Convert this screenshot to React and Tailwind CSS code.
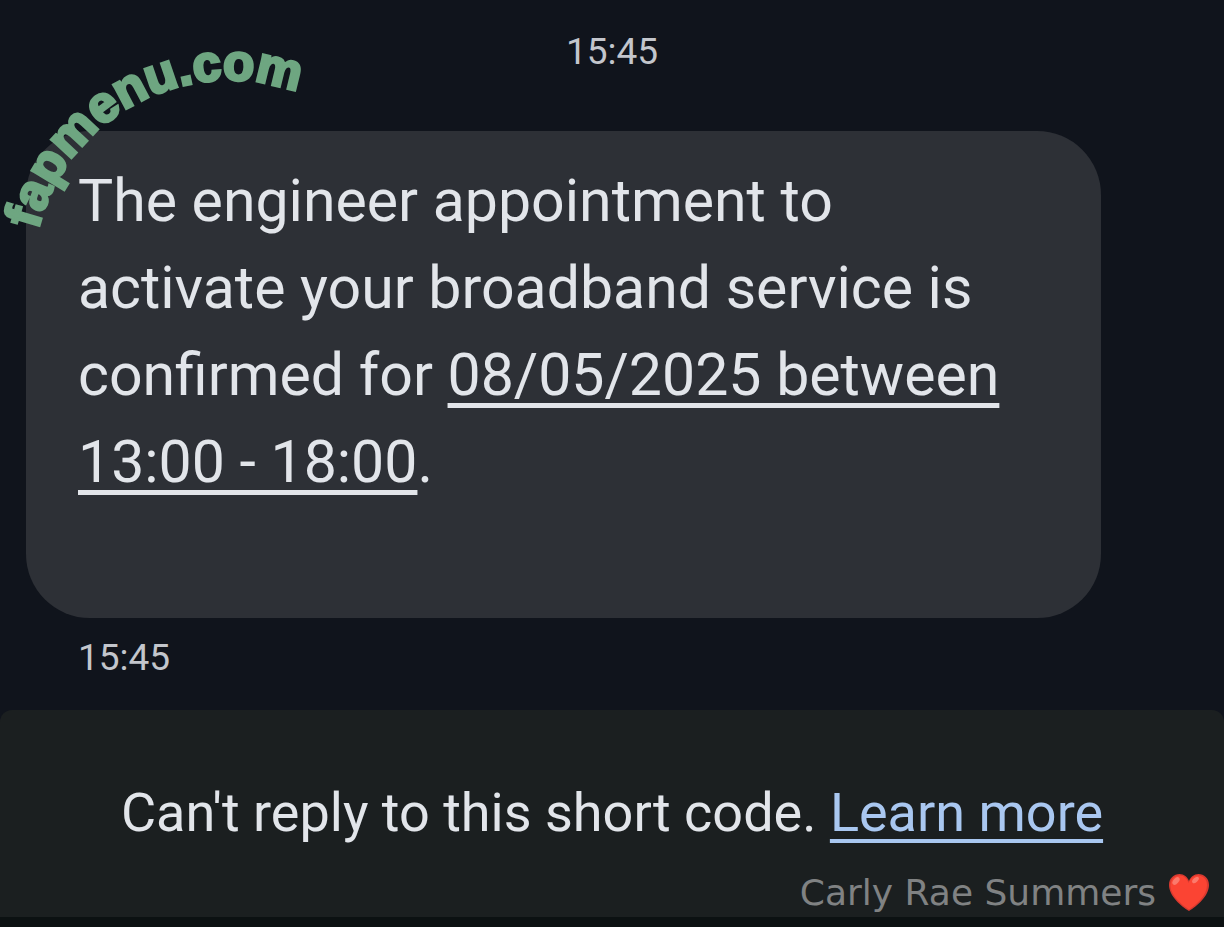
function Watermark() {
  return (
    <svg
      className="pointer-events-none absolute top-0 left-0 h-[250px] w-[320px] overflow-visible"
      viewBox="0 0 320 250"
      role="img"
      aria-label="fapmenu.com"
    >
      <defs>
        <path id="arc" d="M38 230 A197 197 0 0 1 422 236" />
      </defs>
      <text
        className="fill-[#6ea681] stroke-[#6ea681] stroke-3 font-['Liberation_Sans',sans-serif] text-[51px] font-bold"
      >
        <textPath href="#arc">fapmenu.com</textPath>
      </text>
    </svg>
  );
}

function Heart() {
  return (
    <svg className="h-10 w-[42px] shrink-0" viewBox="0 0 42 40" aria-hidden="true">
      <path
        d="M21 38 C13 33 1 23 1 12 C1 5 6 1 11.500 1 C16 1 19.500 4 21 8 C22.500 4 26 1 30.500 1 C36 1 41 5 41 12 C41 23 29 33 21 38Z"
        fill="#d8392f"
      />
      <path
        d="M21 36.500 C14 32 2.500 22.500 2.500 12.500 C2.500 6 7 2.500 11.500 2.500 C16 2.500 19.500 6 20.500 10 C22.500 5 26 2.500 30 2.500 C35 2.500 39 6 39 12 C39 22.500 28 32 21 36.500Z"
        fill="#fb4433"
      />
      <ellipse cx="8" cy="8" rx="4.500" ry="2.600" transform="rotate(-48 8 8)" fill="#fb7a6c" />
      <ellipse cx="27.500" cy="7" rx="4" ry="2.200" transform="rotate(-42 27.500 7)" fill="#fb7a6c" />
    </svg>
  );
}

export default function App() {
  return (
    <div className="relative flex min-h-screen flex-col bg-[#10141c] font-['Roboto',sans-serif] text-[#e2e5ea]">
      <main className="flex flex-col pb-7">
        <time className="pt-7 text-center text-[37px] leading-[48px] text-[#c3c6cc]">15:45</time>
        <section className="mt-[55px] mr-[123px] ml-[26px] rounded-[64px] bg-[#2d3036] px-[52px] pt-[26px] pb-[113px]">
          <p className="text-[59px] leading-[87px]">
            The engineer appointment to
            <br />
            activate your broadband service is
            <br />
            confirmed for{" "}
            <a href="#event" className="underline decoration-[5px] underline-offset-[8px]">
              08/05/2025 between
              <br />
              13:00 - 18:00
            </a>
            .
          </p>
        </section>
        <time className="mt-4 pl-[78px] text-[37px] leading-[48px] text-[#c3c6cc]">15:45</time>
      </main>
      <footer className="flex grow flex-col rounded-t-[12px] border-b-[10px] border-[#0c1112] bg-[#1b1f20]">
        <p className="pt-[69px] text-center text-[54px] leading-[68px]">
          Can't reply to this short code.{" "}
          <a href="#learn" className="text-[#a9c7f0] underline decoration-[4px] underline-offset-[8px]">
            Learn more
          </a>
        </p>
        <div className="mt-auto flex items-center justify-end gap-3 pr-[14px] pb-[3px] font-['DejaVu_Sans',sans-serif] text-[36px] leading-[42px] text-[#808283]">
          <span>Carly Rae Summers</span>
          <Heart />
        </div>
      </footer>
      <Watermark />
    </div>
  );
}
